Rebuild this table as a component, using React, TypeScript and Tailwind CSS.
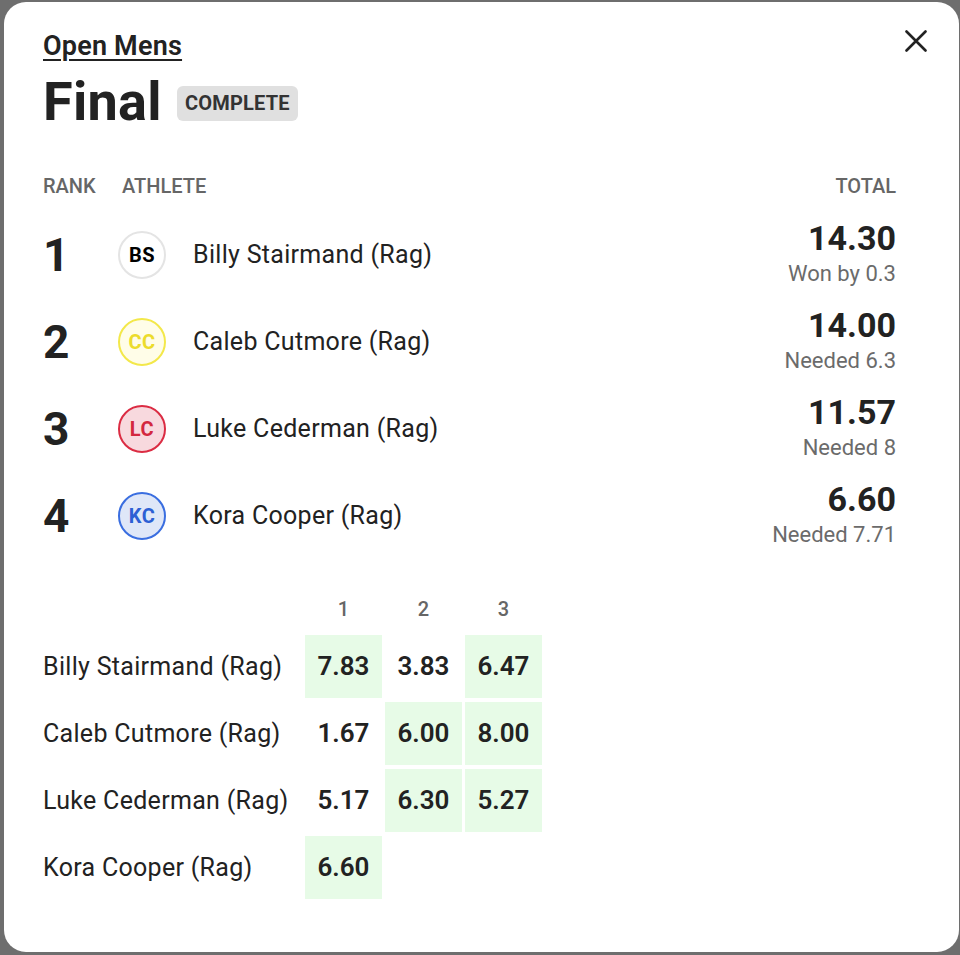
import React from 'react';

interface Athlete {
  rank: number;
  initials: string;
  name: string;
  total: string;
  note: string;
  avatar: string;
  scores: { value: string; counted: boolean }[];
}

const athletes: Athlete[] = [
  {
    rank: 1,
    initials: 'BS',
    name: 'Billy Stairmand (Rag)',
    total: '14.30',
    note: 'Won by 0.3',
    avatar: 'bg-white border-[#e4e4e4] text-black',
    scores: [
      { value: '7.83', counted: true },
      { value: '3.83', counted: false },
      { value: '6.47', counted: true },
    ],
  },
  {
    rank: 2,
    initials: 'CC',
    name: 'Caleb Cutmore (Rag)',
    total: '14.00',
    note: 'Needed 6.3',
    avatar: 'bg-[#fffde8] border-[#f3e84a] text-[#ecdc2c]',
    scores: [
      { value: '1.67', counted: false },
      { value: '6.00', counted: true },
      { value: '8.00', counted: true },
    ],
  },
  {
    rank: 3,
    initials: 'LC',
    name: 'Luke Cederman (Rag)',
    total: '11.57',
    note: 'Needed 8',
    avatar: 'bg-[#f8d9de] border-[#db2c43] text-[#d3283e]',
    scores: [
      { value: '5.17', counted: false },
      { value: '6.30', counted: true },
      { value: '5.27', counted: true },
    ],
  },
  {
    rank: 4,
    initials: 'KC',
    name: 'Kora Cooper (Rag)',
    total: '6.60',
    note: 'Needed 7.71',
    avatar: 'bg-[#dfe7f8] border-[#3a6ee0] text-[#2d60d4]',
    scores: [{ value: '6.60', counted: true }],
  },
];

export default function App() {
  return (
    <div className="w-[960px] h-[955px] bg-[#6e6e6e] overflow-hidden font-['Roboto',sans-serif] text-[#222]">
      <div className="ml-[4px] mt-[2px] w-[955px] h-[950px] bg-white rounded-[22px] relative pl-[39px] pr-[63px] pt-[27px]">
        {/* Close */}
        <button className="absolute right-[32px] top-[28px] w-[22px] h-[22px]">
          <svg width="22" height="22" viewBox="0 0 22 22" fill="none" stroke="#222" strokeWidth="2.6" strokeLinecap="round">
            <path d="M1.5 1.5 20.5 20.5M20.5 1.5 1.5 20.5" />
          </svg>
        </button>

        {/* Title */}
        <a className="text-[27px] leading-[34px] font-semibold tracking-[0.2px] underline underline-offset-[4px] decoration-[2px]">
          Open Mens
        </a>
        <div className="flex items-center gap-[15px] mt-[9px]">
          <h1 className="text-[54px] leading-[60px] font-bold tracking-[0.3px]">Final</h1>
          <span className="bg-[#e0e0e0] rounded-[6px] px-[8px] h-[35px] flex items-center text-[20px] font-bold text-[#333] tracking-[0.2px] mt-[2px]">
            COMPLETE
          </span>
        </div>

        {/* Results header */}
        <div className="flex items-center mt-[42px] h-[24px] text-[20px] font-medium text-[#666]">
          <span className="w-[79px]">RANK</span>
          <span className="flex-1">ATHLETE</span>
          <span>TOTAL</span>
        </div>

        <div className="mt-[13px]">
          {athletes.map((a) => (
            <div key={a.rank} className="flex items-center h-[87px]">
              <span className="w-[75px] text-[46px] font-bold leading-none">{a.rank}</span>
              <span
                className={`w-[48px] h-[48px] rounded-full border-2 flex items-center justify-center text-[20px] font-bold tracking-[0.5px] ${a.avatar}`}
              >
                {a.initials}
              </span>
              <span className="ml-[27px] flex-1 text-[25px] tracking-[0.3px]">{a.name}</span>
              <div className="flex flex-col items-end mb-[4px]">
                <span className="text-[34px] font-bold leading-[42px]">{a.total}</span>
                <span className="text-[22px] leading-[30px] text-[#6b6b6b]">{a.note}</span>
              </div>
            </div>
          ))}
        </div>

        {/* Heat scores */}
        <div className="grid grid-cols-[259px_77px_77px_77px] gap-x-[3px] gap-y-[4px] mt-[38px]">
          <div className="h-[24px] mb-[10px]" />
          {['1', '2', '3'].map((n) => (
            <div key={n} className="h-[24px] mb-[10px] flex items-center justify-center text-[20px] font-medium text-[#666]">
              {n}
            </div>
          ))}
          {athletes.map((a) => (
            <React.Fragment key={a.rank}>
              <div className="h-[63px] flex items-center text-[25px] tracking-[0.3px]">{a.name}</div>
              {[0, 1, 2].map((i) => {
                const s = a.scores[i];
                return (
                  <div
                    key={i}
                    className={`h-[63px] flex items-center justify-center text-[26px] font-semibold ${
                      s && s.counted ? 'bg-[#e7fbe7]' : ''
                    }`}
                  >
                    {s ? s.value : ''}
                  </div>
                );
              })}
            </React.Fragment>
          ))}
        </div>
      </div>
    </div>
  );
}
